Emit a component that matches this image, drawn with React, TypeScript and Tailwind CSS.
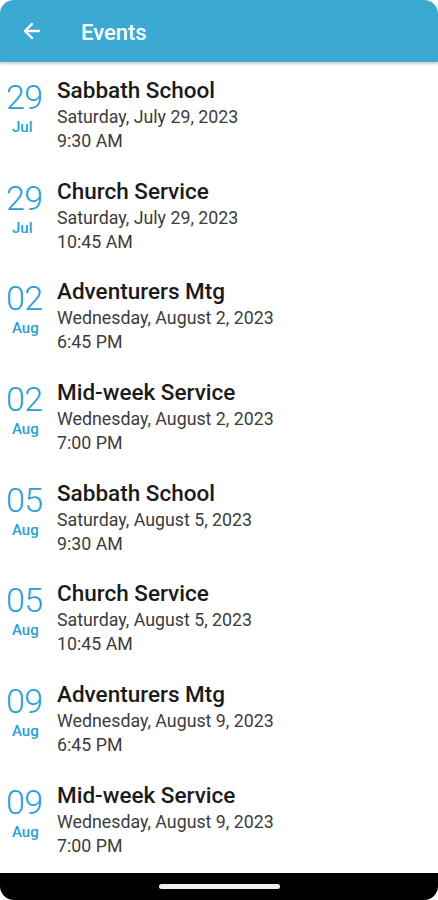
import { ArrowLeft } from "lucide-react";

const events = [
  { day: "29", mon: "Jul", title: "Sabbath School", date: "Saturday, July 29, 2023", time: "9:30 AM" },
  { day: "29", mon: "Jul", title: "Church Service", date: "Saturday, July 29, 2023", time: "10:45 AM" },
  { day: "02", mon: "Aug", title: "Adventurers Mtg", date: "Wednesday, August 2, 2023", time: "6:45 PM" },
  { day: "02", mon: "Aug", title: "Mid-week Service", date: "Wednesday, August 2, 2023", time: "7:00 PM" },
  { day: "05", mon: "Aug", title: "Sabbath School", date: "Saturday, August 5, 2023", time: "9:30 AM" },
  { day: "05", mon: "Aug", title: "Church Service", date: "Saturday, August 5, 2023", time: "10:45 AM" },
  { day: "09", mon: "Aug", title: "Adventurers Mtg", date: "Wednesday, August 9, 2023", time: "6:45 PM" },
  { day: "09", mon: "Aug", title: "Mid-week Service", date: "Wednesday, August 9, 2023", time: "7:00 PM" },
];

export default function App() {
  return (
    <div className="flex h-[900px] w-[438px] flex-col overflow-hidden bg-white font-['Roboto',sans-serif]">
      <header className="relative z-10 flex h-[62px] shrink-0 items-center rounded-t-[14px] bg-[#3aaad3] shadow-[0_2px_3px_rgba(0,0,0,0.2)]">
        <ArrowLeft className="ml-[20px] h-[24px] w-[24px] text-white" strokeWidth={2.3} />
        <h1 className="ml-[37px] mt-[3px] text-[22px] font-medium text-white">Events</h1>
      </header>

      <ul className="flex-1">
        {events.map((e, i) => (
          <li key={i} className="flex h-[100.7px] pt-[15px]">
            <div className="flex w-[57px] flex-col pl-[6px]">
              <span className="mt-[2px] text-[34px] leading-[36px] font-light tracking-[-0.5px] text-[#2a9fd4]">{e.day}</span>
              <span className="mt-[4px] pl-[6px] text-[15px] leading-[16px] font-medium text-[#2a9fd4]">{e.mon}</span>
            </div>
            <div className="flex flex-col">
              <span className="text-[22.5px] leading-[26px] font-medium text-[#1b1b1b]">{e.title}</span>
              <span className="mt-[2px] text-[17.8px] leading-[24px] text-[#3c3c3c]">{e.date}</span>
              <span className="text-[17.8px] leading-[24px] text-[#3c3c3c]">{e.time}</span>
            </div>
          </li>
        ))}
      </ul>

      <div className="flex h-[27px] shrink-0 items-start justify-center rounded-b-[14px] bg-black pt-[11px]">
        <div className="h-[5px] w-[121px] rounded-full bg-[#eee]" />
      </div>
    </div>
  );
}
